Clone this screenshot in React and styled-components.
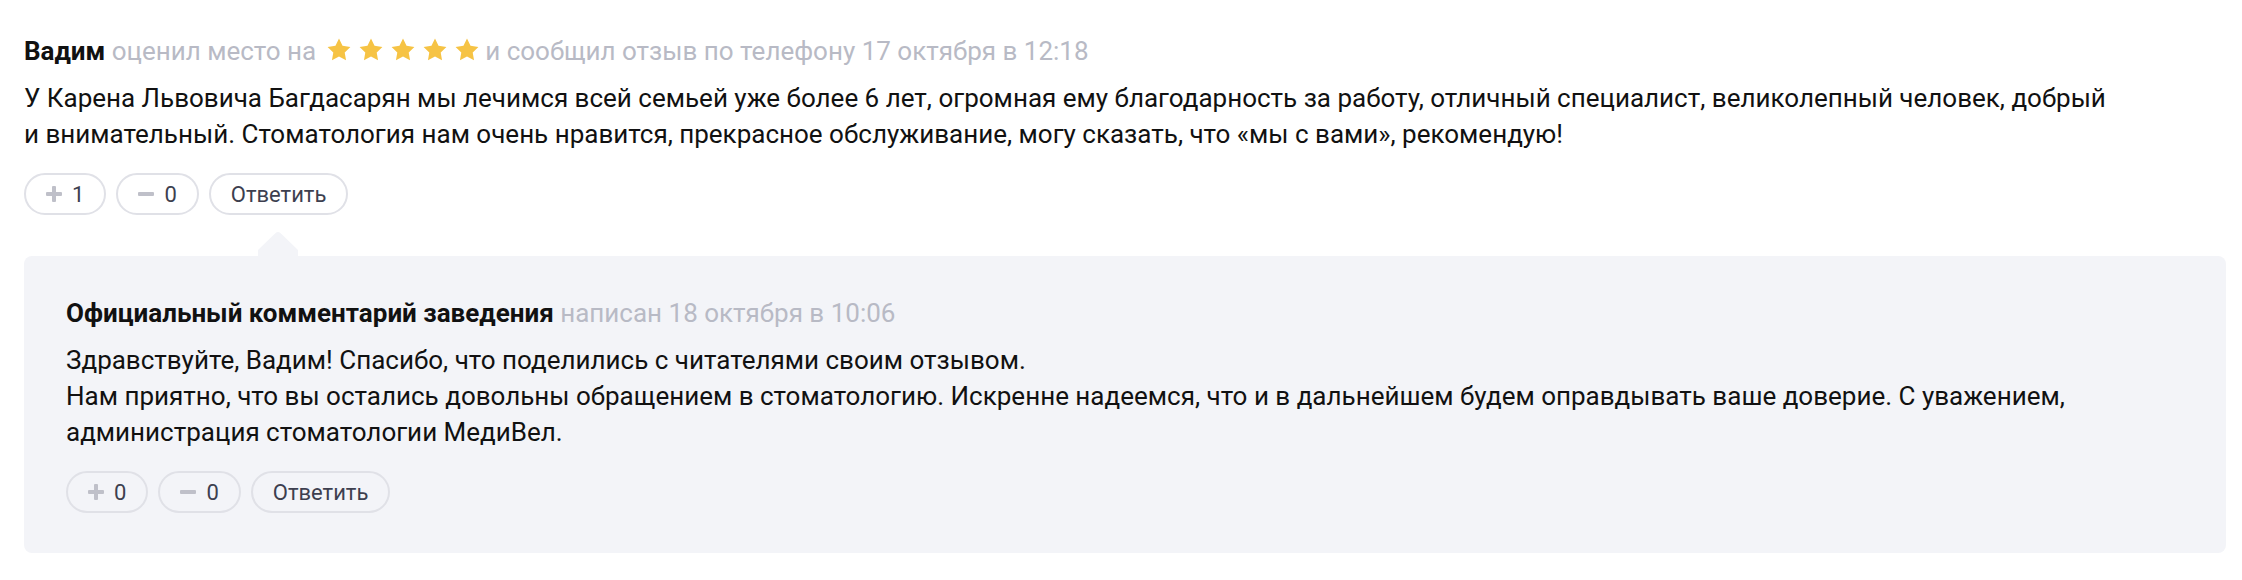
import React from "react";
import styled, { createGlobalStyle } from "styled-components";

const GlobalStyle = createGlobalStyle`
  html, body { margin: 0; padding: 0; background: #ffffff; }
  body {
    font-family: Roboto, Inter, "Noto Sans", sans-serif;
    color: #111111;
    -webkit-font-smoothing: antialiased;
  }
`;

const Page = styled.div`
  padding: 33px 16px 27px 24px;
`;

const Review = styled.article`
  display: flex;
  flex-direction: column;
`;

const Meta = styled.div`
  font-size: 26px;
  line-height: 36px;
  color: #b8bac5;
`;

const Author = styled.span`
  color: #111111;
  font-weight: 700;
`;

const Stars = styled.span`
  display: inline-flex;
  gap: 8px;
  margin-left: 4px;
  vertical-align: -2px;
`;

const StarSvg = styled.svg`
  width: 24px;
  height: 24px;
  display: block;
  fill: #f6c344;
`;

const Text = styled.p`
  margin: 11px 0 0;
  font-size: 26px;
  line-height: 36px;
  color: #111111;
`;

const Actions = styled.div`
  display: flex;
  gap: 10px;
  margin-top: 21px;
`;

const Pill = styled.button`
  box-sizing: border-box;
  height: 42px;
  padding: 0 20px;
  display: inline-flex;
  align-items: center;
  gap: 10px;
  border: 2px solid #e0e1e7;
  border-radius: 21px;
  background: transparent;
  font-family: inherit;
  font-size: 22px;
  color: #3d3f4f;
  cursor: pointer;
`;

const IconSvg = styled.svg`
  width: 16px;
  height: 16px;
  display: block;
  fill: #bfc0c9;
`;

const ReplyBox = styled.section`
  position: relative;
  margin-top: 41px;
  background: #f3f4f8;
  border-radius: 8px;
  padding: 39px 42px 40px;
`;

const Arrow = styled.svg`
  position: absolute;
  top: -24px;
  left: ${(p) => p.$left}px;
  width: 40px;
  height: 24px;
  fill: #f3f4f8;
`;

const Star = () => (
  <StarSvg viewBox="0 0 24 24">
    <path
      d="M12 0.6 L15.53 7.75 L23.41 8.89 L17.71 14.45 L19.05 22.31 L12 18.6 L4.95 22.31 L6.29 14.45 L0.59 8.89 L8.47 7.75 Z"
      strokeLinejoin="round"
    />
  </StarSvg>
);

const PlusIcon = () => (
  <IconSvg viewBox="0 0 16 16">
    <rect x="0" y="6" width="16" height="4" rx="1" />
    <rect x="6" y="0" width="4" height="16" rx="1" />
  </IconSvg>
);

const MinusIcon = () => (
  <IconSvg viewBox="0 0 16 16">
    <rect x="0" y="6" width="16" height="4" rx="1" />
  </IconSvg>
);

const Votes = ({ up, down }) => (
  <Actions>
    <Pill>
      <PlusIcon />
      {up}
    </Pill>
    <Pill>
      <MinusIcon />
      {down}
    </Pill>
    <Pill>Ответить</Pill>
  </Actions>
);

export default function App() {
  return (
    <>
      <GlobalStyle />
      <Page>
        <Review>
          <Meta>
            <Author>Вадим</Author> оценил место на{" "}
            <Stars>
              <Star />
              <Star />
              <Star />
              <Star />
              <Star />
            </Stars>{" "}
            и сообщил отзыв по телефону 17 октября в 12:18
          </Meta>
          <Text>
            У Карена Львовича Багдасарян мы лечимся всей семьей уже более 6 лет, огромная ему
            благодарность за работу, отличный специалист, великолепный человек, добрый
            <br />и внимательный. Стоматология нам очень нравится, прекрасное обслуживание, могу
            сказать, что «мы с вами», рекомендую!
          </Text>
          <Votes up={1} down={0} />
          <ReplyBox>
            <Arrow $left={234} viewBox="0 0 40 24">
              <path d="M0 24 V18 L17.4 1.3 Q20 -1.2 22.6 1.3 L40 18 V24 Z" />
            </Arrow>
            <Meta>
              <Author>Официальный комментарий заведения</Author> написан 18 октября в 10:06
            </Meta>
            <Text>
              Здравствуйте, Вадим! Спасибо, что поделились с читателями своим отзывом.
              <br />
              Нам приятно, что вы остались довольны обращением в стоматологию. Искренне надеемся,
              что и в дальнейшем будем оправдывать ваше доверие. С уважением, администрация
              стоматологии МедиВел.
            </Text>
            <Votes up={0} down={0} />
          </ReplyBox>
        </Review>
      </Page>
    </>
  );
}
